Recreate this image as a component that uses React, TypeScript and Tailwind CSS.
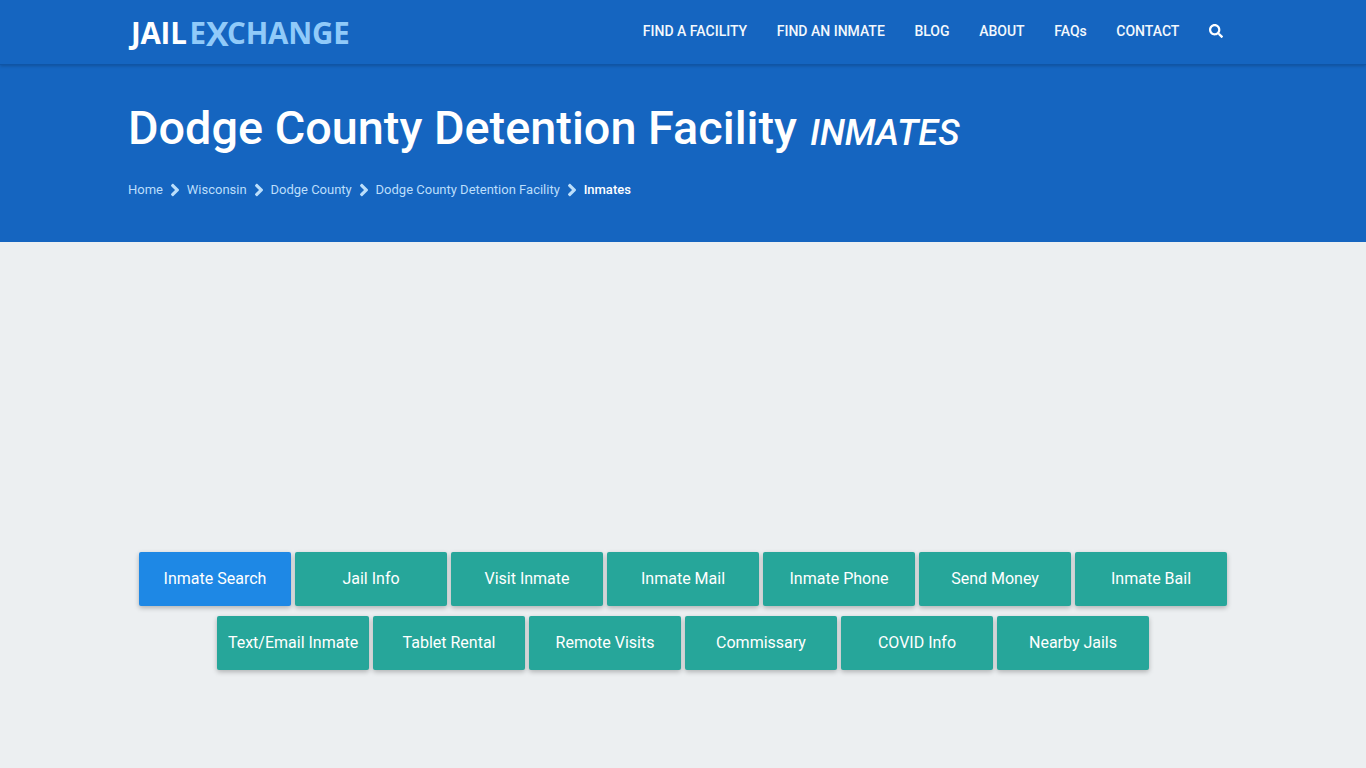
import { FaSearch, FaAngleRight } from "react-icons/fa";

const navItems = ["FIND A FACILITY", "FIND AN INMATE", "BLOG", "ABOUT", "FAQs", "CONTACT"];
const crumbs = ["Home", "Wisconsin", "Dodge County", "Dodge County Detention Facility"];
const buttons = [
  "Inmate Search", "Jail Info", "Visit Inmate", "Inmate Mail", "Inmate Phone", "Send Money", "Inmate Bail",
  "Text/Email Inmate", "Tablet Rental", "Remote Visits", "Commissary", "COVID Info", "Nearby Jails",
];

export default function App() {
  return (
    <div className="min-h-[768px] bg-[#eceff1] font-['Roboto',sans-serif] text-white overflow-hidden">
      <header className="h-[65px] bg-[#1565c0] border-b border-[#0f55a6] shadow-[0_1px_3px_rgba(0,0,0,0.2)] relative">
        <div className="w-[1140px] mx-auto pl-[15px] pr-[30px] flex items-center justify-between h-16">
          <div className="font-['Open_Sans',sans-serif] font-bold text-[29.5px] leading-none ml-[3px] pt-[1px] flex items-center">
            <span className="text-white mr-[3px] tracking-[-0.25px]">JAIL</span>
            <span className="text-[#90caf9] flex items-center tracking-[-0.2px]">
              E<span className="text-[34px] leading-none tracking-[-1.5px]">X</span>CHANGE
            </span>
          </div>
          <nav className="flex items-center gap-[29.6px] text-sm font-medium h-full pb-[2px]">
            {navItems.map((n) => (
              <span key={n} className="text-[#f3f8fd]">{n}</span>
            ))}
            <FaSearch size={14} className="text-white" />
          </nav>
        </div>
      </header>
      <section className="h-[177px] bg-[#1565c0]">
        <div className="w-[1140px] mx-auto px-[15px] pt-[33px]">
          <h1 className="flex items-baseline text-[46.8px] leading-[60px] font-medium">
            Dodge County Detention Facility
            <em className="text-[36.2px] ml-[13px] font-medium relative top-[1px]">INMATES</em>
          </h1>
          <div className="flex items-center text-[13px] mt-[18px] leading-5 text-[#bbdefb]">
            {crumbs.map((c) => (
              <span key={c} className="flex items-center">
                {c}
                <span className="w-[23.8px] flex justify-center pl-[1px]">
                  <FaAngleRight size={20} className="text-[#bbdefb]" />
                </span>
              </span>
            ))}
            <span className="text-white font-medium">Inmates</span>
          </div>
        </div>
      </section>
      <main className="w-[1140px] mx-auto pt-[310px] flex flex-wrap justify-center gap-x-1 gap-y-[10px]">
        {buttons.map((b, i) => (
          <div
            key={b}
            className={`w-[152px] h-[54px] rounded-[2px] flex items-center justify-center text-base shadow-[0_2px_5px_rgba(0,0,0,0.26)] ${
              i === 0 ? "bg-[#1e88e5]" : "bg-[#26a69a]"
            }`}
          >
            {b}
          </div>
        ))}
      </main>
    </div>
  );
}
